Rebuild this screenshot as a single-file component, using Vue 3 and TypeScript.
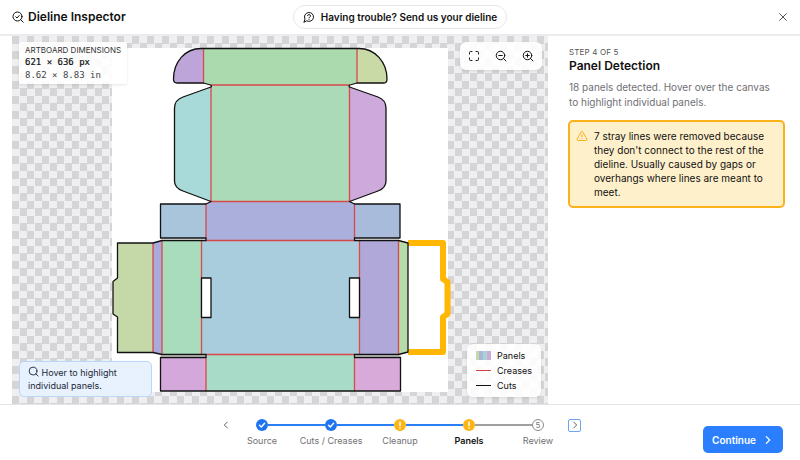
<script setup lang="ts">
import { ref } from 'vue'

type StepState = 'done' | 'warning' | 'todo'

interface Step {
  label: string
  state: StepState
}

interface Panel {
  fill: string
  d: string
}

const current = ref(3)

const steps: Step[] = [
  { label: 'Source', state: 'done' },
  { label: 'Cuts / Creases', state: 'done' },
  { label: 'Cleanup', state: 'warning' },
  { label: 'Panels', state: 'warning' },
  { label: 'Review', state: 'todo' },
]

const panels: Panel[] = [
  { fill: '#bda5d9', d: 'M203.5 48.5H201C185 48.5 173.5 62 173.5 79Q173.5 83 177 83H203.5Z' },
  { fill: '#aadaad', d: 'M203.5 48.5H357V83L349.5 85H211L203.5 83Z' },
  { fill: '#c9daa6', d: 'M357 48.5H359C375 48.5 387 62 387 79Q387 83 384 83H357Z' },
  { fill: '#a7dad8', d: 'M211 87L183 97Q174.5 100 174.5 108V181Q174.5 188 183 191L211 201.5Z' },
  { fill: '#abdab9', d: 'M211 85H349.5V201.5H211Z' },
  { fill: '#cea9dc', d: 'M349.5 87L378 97Q386 100 386 108V181Q386 188 378 191L349.5 201.5Z' },
  { fill: '#a9c5dc', d: 'M160.5 204H206V238H160.5Z' },
  { fill: '#aaafdc', d: 'M211 201.5H349.5L354.5 204V240.5H206V204Z' },
  { fill: '#a9bbdb', d: 'M354.5 204H400V238H354.5Z' },
  { fill: '#c5d9a8', d: 'M117.5 243H153V352.5H117.5V317L113 314V281.5L117.5 278Z' },
  { fill: '#a9a9dc', d: 'M153 243L162 240.5V354.5L153 352.5Z' },
  { fill: '#a9dcbd', d: 'M162 240.5H201.5V354.5H162Z' },
  { fill: '#a9cddc', d: 'M201.5 240.5H359.5V354.5H201.5Z' },
  { fill: '#b1a8da', d: 'M359.5 240.5H398.5V354.5H359.5Z' },
  { fill: '#b5dba8', d: 'M398.5 240.5L408 243V352L398.5 354.5Z' },
  { fill: '#d5a8dc', d: 'M160.5 357.5H206V391H160.5Z' },
  { fill: '#a8dbc8', d: 'M206 354.5H354.5V391H206Z' },
  { fill: '#d8aada', d: 'M354.5 357.5H400.5V391H354.5Z' },
]

const creases =
  'M203.5 49V83M357 49V83M211 85H349.5M211 87V201.5M349.5 87V201.5M211 201.5H349.5' +
  'M206 204V238M354.5 204V238M206 240.5H354.5M153 243V352.5M162 240.5V354.5M201.5 240.5V354.5' +
  'M359.5 240.5V354.5M398.5 240.5V354.5M206 354.5H354.5M206 357.5V391M354.5 357.5V391'

const cuts =
  'M203.5 48.5H359C375 48.5 387 62 387 79Q387 83 384 83H357L350 85Q348.5 86 349.5 87L378 97' +
  'Q386 100 386 108V181Q386 188 378 191L349.5 201.5L354.5 204H400V238H354.5V240.5H398.5L408 243' +
  'V352L398.5 354.5H354.5V357.5H400.5V391H160.5V357.5H206V354.5H162L153 352.5H117.5V317L113 314' +
  'V281.5L117.5 278V243H153L162 240.5H206V238H160.5V204H206L211 201.5L183 191Q174.5 188 174.5 181' +
  'V108Q174.5 100 183 97L211 87Q212 86 210.5 85L203.5 83H177Q173.5 83 173.5 79' +
  'C173.5 62 185 48.5 201 48.5Z'

const slots = 'M201.5 278H211V317.5H201.5ZM349.5 278H359.5V317.5H349.5Z'

const strayLine = 'M408 243H443V279L447.5 282V314L443 317V352H408'
</script>

<template>
  <div class="app">
    <header class="topbar">
      <h1 class="brand">
        <svg class="icon-brand" viewBox="0 0 24 24" aria-hidden="true">
          <circle cx="11" cy="11" r="9" />
          <path d="m17.500 17.500 5 5M7.500 11.500l2.500 2.500 4.500-5" />
        </svg>
        Dieline Inspector
      </h1>
      <button class="help" type="button">
        <svg class="icon-help" viewBox="0 0 24 24" aria-hidden="true">
          <path d="M7.900 20A9 9 0 1 0 4 16.100L2 22Z" />
          <path d="M9.100 9a3 3 0 0 1 5.800 1c0 2-3 2.500-3 4M12 17h.01" />
        </svg>
        Having trouble? Send us your dieline
      </button>
      <button class="close" type="button" aria-label="Close">
        <svg viewBox="0 0 24 24" aria-hidden="true"><path d="M4 4l16 16M20 4L4 20" /></svg>
      </button>
    </header>

    <main class="body">
      <section class="canvas" aria-label="Dieline canvas">
        <svg class="artboard" viewBox="112 48 336 344" role="img" aria-label="Dieline">
          <rect x="112" y="48" width="336" height="344" fill="#fff" />
          <path d="M160.500 354.500H206V357.500H160.500ZM354.500 354.500H400.500V357.500H354.500Z" fill="#d5d5d5" />
          <path v-for="(panel, i) in panels" :key="i" :d="panel.d" :fill="panel.fill" />
          <path class="crease" :d="creases" />
          <path class="stray" :d="strayLine" />
          <path class="cut" :d="cuts" />
          <path class="slot" :d="slots" />
        </svg>

        <div class="card dimensions">
          <h2>Artboard dimensions</h2>
          <p class="px">621 × 636 px</p>
          <p class="inches">8.62 × 8.83 in</p>
        </div>

        <div class="card zoom-tools">
          <button type="button" aria-label="Fit to screen">
            <svg viewBox="0 0 24 24" aria-hidden="true">
              <path d="M8 3H5a2 2 0 0 0-2 2v3M16 3h3a2 2 0 0 1 2 2v3M8 21H5a2 2 0 0 1-2-2v-3M16 21h3a2 2 0 0 0 2-2v-3" />
            </svg>
          </button>
          <button type="button" aria-label="Zoom out">
            <svg viewBox="0 0 24 24" aria-hidden="true">
              <circle cx="11" cy="11" r="8.500" /><path d="m17 17 5 5M7.500 11h7" />
            </svg>
          </button>
          <button type="button" aria-label="Zoom in">
            <svg viewBox="0 0 24 24" aria-hidden="true">
              <circle cx="11" cy="11" r="8.500" /><path d="m17 17 5 5M7.500 11h7M11 7.500v7" />
            </svg>
          </button>
        </div>

        <p class="hint">
          <svg viewBox="0 0 24 24" aria-hidden="true">
            <circle cx="11" cy="11" r="8.500" /><path d="m17 17 5 5" />
          </svg>
          Hover to highlight<br />individual panels.
        </p>

        <ul class="card legend">
          <li><span class="swatch swatch-panels"></span>Panels</li>
          <li><span class="swatch swatch-crease"></span>Creases</li>
          <li><span class="swatch swatch-cut"></span>Cuts</li>
        </ul>
      </section>

      <aside class="sidebar">
        <p class="eyebrow">Step {{ current + 1 }} of {{ steps.length }}</p>
        <h2>Panel Detection</h2>
        <p class="lead">{{ panels.length }} panels detected. Hover over the canvas to highlight individual panels.</p>
        <div class="alert" role="status">
          <svg viewBox="0 0 24 24" aria-hidden="true">
            <path d="m21.700 18-8-14a2 2 0 0 0-3.500 0l-8 14A2 2 0 0 0 4 21h16a2 2 0 0 0 1.700-3ZM12 9v5M12 17.500h.01" />
          </svg>
          <p>
            7 stray lines were removed because they don't connect to the rest of the dieline. Usually caused by gaps or
            overhangs where lines are meant to meet.
          </p>
        </div>
      </aside>
    </main>

    <footer class="footer">
      <nav class="stepper" aria-label="Steps">
        <button class="arrow" type="button" aria-label="Previous step">
          <svg viewBox="0 0 24 24" aria-hidden="true"><path d="m15 5-7 7 7 7" /></svg>
        </button>
        <ol>
          <li v-for="(step, i) in steps" :key="step.label" :class="[step.state, { current: i === current }]">
            <span class="dot">
              <svg v-if="step.state === 'done'" viewBox="0 0 12 12" aria-hidden="true"><path d="m3.500 6.300 1.800 1.700 3.300-3.700" /></svg>
              <svg v-else-if="step.state === 'warning'" viewBox="0 0 12 12" aria-hidden="true"><path d="M6 3v3.500M6 8.700v.2" /></svg>
              <template v-else>{{ i + 1 }}</template>
            </span>
            <span class="label">{{ step.label }}</span>
          </li>
        </ol>
        <button class="arrow next" type="button" aria-label="Next step">
          <svg viewBox="0 0 24 24" aria-hidden="true"><path d="m9 5 7 7-7 7" /></svg>
        </button>
      </nav>
      <button class="continue" type="button">
        Continue
        <svg viewBox="0 0 24 24" aria-hidden="true"><path d="m8 4 8 8-8 8" /></svg>
      </button>
    </footer>
  </div>
</template>

<style>
body {
  margin: 0;
  background: #fff;
}
</style>

<style scoped>
.app {
  display: grid;
  grid-template-rows: auto 1fr auto;
  min-height: 100vh;
  font-family: Inter, 'Liberation Sans', sans-serif;
  font-size: 10px;
  color: #111;
}

.app * {
  box-sizing: border-box;
}

h1,
h2,
p,
ul,
ol {
  margin: 0;
  padding: 0;
  list-style: none;
}

button {
  font: inherit;
  color: inherit;
  padding: 0;
  border: 0;
  background: none;
  cursor: pointer;
}

svg {
  fill: none;
  stroke: currentColor;
  stroke-width: 2;
  stroke-linecap: round;
  stroke-linejoin: round;
}

.topbar {
  display: grid;
  grid-template-columns: 1fr auto 1fr;
  align-items: center;
  padding: 5px 12px;
  border-bottom: 2px solid #ececee;
}

.brand {
  display: flex;
  align-items: center;
  gap: 4px;
  font-size: 12px;
  line-height: 16px;
  font-weight: 600;
}

.icon-brand {
  width: 12px;
  height: 12px;
}

.help {
  display: flex;
  align-items: center;
  gap: 6px;
  height: 24px;
  padding: 0 9px;
  border: 1px solid #e6e6e8;
  border-radius: 12px;
  font-size: 10px;
  font-weight: 600;
}

.icon-help {
  width: 12px;
  height: 12px;
}

.close {
  display: flex;
  justify-self: end;
  color: #333;
}

.close svg {
  width: 10px;
  height: 10px;
}

.body {
  display: grid;
  grid-template-columns: 1fr 252px;
}

.canvas {
  position: relative;
  display: flex;
  align-items: center;
  justify-content: center;
  margin-left: 12px;
  background: repeating-conic-gradient(#efeff1 0 25%, #d5d5d7 0 50%) 0 0 / 15px 15px;
}

.artboard {
  width: 336px;
  height: 344px;
  overflow: visible;
  stroke: none;
}

.crease {
  stroke: #d9484a;
  stroke-width: 1.3;
}

.cut {
  stroke: #111;
  stroke-width: 1.3;
}

.slot {
  fill: #fff;
  stroke: #111;
  stroke-width: 1.3;
}

.stray {
  stroke: #ffb703;
  stroke-width: 6;
  stroke-linecap: butt;
}

.card {
  position: absolute;
  background: rgba(255, 255, 255, 0.9);
  box-shadow: 0 1px 3px rgba(0, 0, 0, 0.1);
}

.dimensions {
  top: 6px;
  left: 7px;
  padding: 2px 6px;
  border-radius: 2px;
  font-family: 'DejaVu Sans Mono', 'Liberation Mono', monospace;
  font-size: 9px;
  line-height: 13px;
}

.dimensions h2 {
  font-family: Inter, 'Liberation Sans', sans-serif;
  font-size: 8px;
  line-height: 12px;
  font-weight: 400;
  text-transform: uppercase;
  color: #333;
}

.px {
  -webkit-text-stroke: 0.2px;
}

.inches {
  color: #444;
}

.zoom-tools {
  top: 6px;
  right: 6px;
  display: flex;
  gap: 3px;
  padding: 2px;
  border-radius: 6px;
}

.zoom-tools button {
  display: flex;
  align-items: center;
  justify-content: center;
  width: 24px;
  height: 24px;
}

.zoom-tools svg {
  width: 12px;
  height: 12px;
}

.hint {
  position: absolute;
  left: 7px;
  bottom: 7px;
  width: 133px;
  padding: 4px 8px;
  border: 1px solid #b9d6fb;
  border-radius: 5px;
  background: #e8f2ff;
  font-size: 9px;
  line-height: 13px;
  color: #1c2733;
}

.hint svg {
  width: 11px;
  height: 11px;
  vertical-align: -1px;
}

.legend {
  right: 7px;
  bottom: 7px;
  padding: 4px 9px;
  border-radius: 6px;
  font-size: 9px;
}

.legend li {
  display: flex;
  align-items: center;
  gap: 6px;
  line-height: 15px;
}

.swatch {
  width: 15px;
}

.swatch-panels {
  height: 9px;
  background: linear-gradient(90deg, #c5d9a8 0 20%, #a9b5dc 20% 45%, #a9dcbd 45% 55%, #a9cddc 55% 65%, #a8dbc8 65% 75%, #cea9dc 75%);
}

.swatch-crease {
  border-top: 1px solid #d9433f;
}

.swatch-cut {
  border-top: 1px solid #111;
}

.sidebar {
  padding: 10px 15px 10px 20px;
}

.eyebrow {
  padding-left: 1px;
  font-size: 8px;
  line-height: 12px;
  letter-spacing: 0.02em;
  text-transform: uppercase;
  color: #555;
}

.sidebar h2 {
  padding-left: 1px;
  font-size: 12px;
  line-height: 16px;
  font-weight: 600;
}

.lead {
  padding: 0 8px 0 1px;
  margin-top: 6px;
  font-size: 10px;
  line-height: 15px;
  color: #707074;
}

.alert {
  display: flex;
  align-items: flex-start;
  gap: 6px;
  margin-top: 10px;
  padding: 7px 8px 7px 6px;
  border: 2px solid #fab219;
  border-radius: 5px;
  background: #fff0cc;
  font-size: 10px;
  line-height: 14px;
}

.alert svg {
  flex: none;
  width: 12px;
  height: 12px;
  margin-top: 1px;
  color: #fab219;
}

.footer {
  display: grid;
  grid-template-columns: 1fr auto 1fr;
  align-items: center;
  height: 56px;
  padding: 0 17px;
  border-top: 1px solid #e4e4e8;
}

.stepper {
  grid-column: 2;
  display: flex;
  align-items: flex-start;
  gap: 24px;
}

.stepper ol {
  display: flex;
  gap: 57px;
}

.stepper li {
  position: relative;
  display: flex;
  flex-direction: column;
  align-items: center;
  width: 12px;
}

.stepper li + li::before {
  content: '';
  position: absolute;
  top: 5px;
  right: 12px;
  width: 57px;
  height: 2px;
  background: #2b7ff5;
}

.stepper li.todo::before {
  background: #a0a0a3;
}

.dot {
  display: flex;
  align-items: center;
  justify-content: center;
  width: 12px;
  height: 12px;
  border-radius: 50%;
  font-size: 8px;
  line-height: 8px;
  color: #fff;
}

.dot svg {
  width: 12px;
  height: 12px;
  stroke-width: 1.5;
}

.done .dot {
  background: #1f74f2;
}

.warning .dot {
  background: #fdb515;
}

.todo .dot {
  border: 1px solid #8b8b8f;
  color: #77777b;
}

.label {
  margin-top: 4px;
  font-size: 9px;
  line-height: 12px;
  white-space: nowrap;
  color: #707074;
}

.current .label {
  font-weight: 600;
  color: #111;
}

.arrow {
  display: flex;
  align-items: center;
  justify-content: center;
  width: 13px;
  height: 13px;
  border-radius: 2px;
  color: #444;
}

.arrow svg {
  width: 10px;
  height: 10px;
}

.next {
  border: 1px solid #6ba3f5;
}

.continue {
  display: flex;
  align-items: center;
  justify-self: end;
  gap: 7px;
  height: 27px;
  margin-top: 14px;
  padding: 0 10px 0 9px;
  border-radius: 5px;
  background: #2b7fff;
  font-size: 10px;
  font-weight: 600;
  color: #fff;
}

.continue svg {
  width: 10px;
  height: 10px;
  stroke-width: 3;
}
</style>
